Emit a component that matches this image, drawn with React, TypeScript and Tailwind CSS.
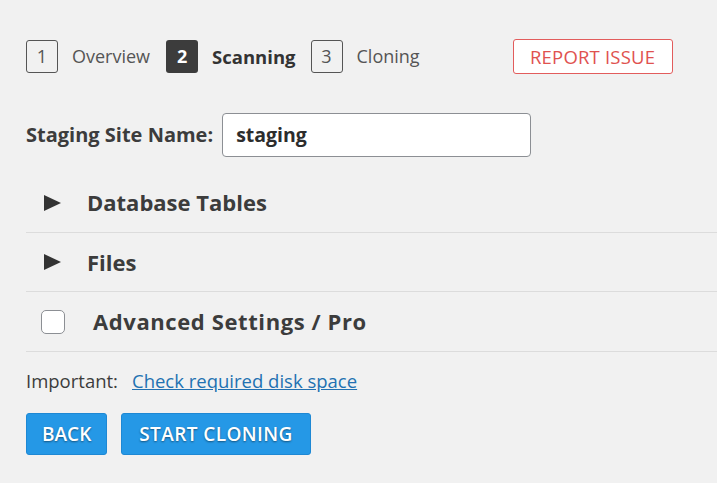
import React from 'react';

const font = { fontFamily: '"Segoe UI", "Open Sans", "Noto Sans", sans-serif' };

function Step({ n, label, active }: { n: number; label: string; active?: boolean }) {
  return (
    <div className="flex items-center">
      <span
        className={
          active
            ? 'w-[32px] h-[33px] rounded-[3px] bg-[#3c3c3c] text-white font-bold flex items-center justify-center text-[18px]'
            : 'w-[32px] h-[33px] rounded-[3px] border border-[#555] text-[#555] flex items-center justify-center text-[18px]'
        }
      >
        {n}
      </span>
      <span className={active ? 'ml-[14px] text-[18.5px] font-bold text-[#333]' : 'ml-[14px] text-[18px] text-[#555]'}>
        {label}
      </span>
    </div>
  );
}

function Arrow() {
  return (
    <svg width="17" height="16" viewBox="0 0 17 16" className="fill-[#333]">
      <polygon points="0,0 17,8 0,16" />
    </svg>
  );
}

export default function App() {
  return (
    <div className="w-[717px] h-[483px] bg-[#f1f1f1] overflow-hidden" style={font}>
      <div className="pl-[26px] pt-[39px]">
        {/* steps */}
        <div className="flex items-center h-[35px]">
          <Step n={1} label="Overview" />
          <div className="w-[16px]" />
          <Step n={2} label="Scanning" active />
          <div className="w-[15px]" />
          <Step n={3} label="Cloning" />
          <button className="ml-[93px] w-[160px] h-[35px] bg-white border border-[#e25c5c] rounded-[3px] text-[#e0524f] text-[18.5px] tracking-[0.2px]">
            REPORT ISSUE
          </button>
        </div>

        {/* site name */}
        <div className="flex items-center mt-[39px]">
          <span className="text-[20px] font-bold text-[#3c3c3c]">Staging Site Name:</span>
          <div className="ml-[9px] w-[309px] h-[44px] bg-white border border-[#8c8f94] rounded-[4px] flex items-center pl-[13px] text-[19.5px] font-bold text-[#2c2c2c]">
            staging
          </div>
        </div>

        {/* sections */}
        <div className="mt-[18px]">
          <div className="h-[60px] flex items-center border-b border-[#dcdcdc] pl-[18px] -mt-[2px]">
            <Arrow />
            <span className="ml-[26px] text-[22px] font-bold text-[#3c3c3c]">Database Tables</span>
          </div>
          <div className="h-[59px] flex items-center border-b border-[#dcdcdc] pl-[18px]">
            <Arrow />
            <span className="ml-[26px] text-[22px] font-bold text-[#3c3c3c]">Files</span>
          </div>
          <div className="h-[60px] flex items-center border-b border-[#dcdcdc] pl-[15px]">
            <span className="w-[24px] h-[24px] bg-white border border-[#8c8f94] rounded-[5px]" />
            <span className="ml-[28px] text-[22px] tracking-[0.6px] font-bold text-[#3c3c3c]">Advanced Settings / Pro</span>
          </div>
        </div>

        {/* important */}
        <div className="mt-[15px] flex items-center text-[18.5px]">
          <span className="text-[#3c3c3c]">Important:</span>
          <a className="ml-[14px] text-[#2271b1] underline">Check required disk space</a>
        </div>

        {/* buttons */}
        <div className="mt-[18px] flex gap-[14px]">
          <button className="h-[42px] px-[15px] bg-[#2598e6] border border-[#1e88d4] rounded-[3px] text-white text-[19px] font-semibold [text-shadow:0_1px_2px_rgba(0,0,0,0.45)]">
            BACK
          </button>
          <button className="h-[42px] px-[17px] bg-[#2598e6] border border-[#1e88d4] rounded-[3px] text-white text-[19px] tracking-[0.4px] font-semibold [text-shadow:0_1px_2px_rgba(0,0,0,0.45)]">
            START CLONING
          </button>
        </div>
      </div>
    </div>
  );
}
